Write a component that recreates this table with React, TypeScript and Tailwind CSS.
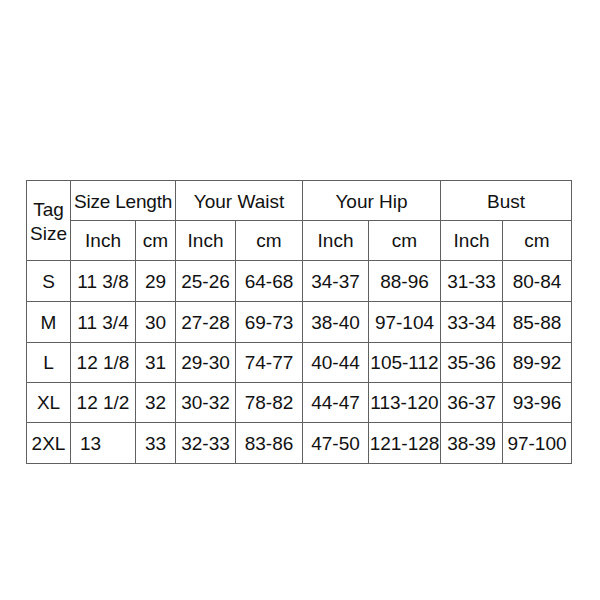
import React from "react";

const widths = [44, 65, 40, 60, 67, 66, 72, 62, 69];

const rows: [string, string, string, string, string, string, string, string, string][] = [
  ["S", "11 3/8", "29", "25-26", "64-68", "34-37", "88-96", "31-33", "80-84"],
  ["M", "11 3/4", "30", "27-28", "69-73", "38-40", "97-104", "33-34", "85-88"],
  ["L", "12 1/8", "31", "29-30", "74-77", "40-44", "105-112", "35-36", "89-92"],
  ["XL", "12 1/2", "32", "30-32", "78-82", "44-47", "113-120", "36-37", "93-96"],
  ["2XL", "13", "33", "32-33", "83-86", "47-50", "121-128", "38-39", "97-100"],
];

const rowHeights = [41, 41, 40, 40, 41];

export default function App() {
  const cell = "border border-[#606060] text-center p-0 whitespace-nowrap";
  return (
    <div
      className="w-[600px] h-[600px] bg-white pt-[180px] pl-[26px] text-[#111] text-[19px] leading-none"
      style={{ fontFamily: '"Liberation Sans", Arial, sans-serif' }}
    >
      <table className="table-fixed border-collapse w-[545px]">
        <colgroup>
          {widths.map((w, i) => (
            <col key={i} style={{ width: w }} />
          ))}
        </colgroup>
        <tbody>
          <tr className="h-[40px]">
            <td rowSpan={2} className={`${cell} leading-[23px] pt-[4px]`}>
              <div className="pb-[1px]">Tag</div>
              <div className="pb-[3px]">Size</div>
            </td>
            <td colSpan={2} className={`${cell} tracking-[-0.2px] pt-[2px]`}>Size Length</td>
            <td colSpan={2} className={`${cell} pt-[2px]`}>Your Waist</td>
            <td colSpan={2} className={`${cell} pt-[2px]`}>Your Hip</td>
            <td colSpan={2} className={`${cell} pt-[2px]`}>Bust</td>
          </tr>
          <tr className="h-[40px]">
            <td className={cell}>Inch</td>
            <td className={cell}>cm</td>
            <td className={cell}>Inch</td>
            <td className={cell}>cm</td>
            <td className={cell}>Inch</td>
            <td className={cell}>cm</td>
            <td className={cell}>Inch</td>
            <td className={cell}>cm</td>
          </tr>
          {rows.map((r, ri) => (
            <tr key={ri} style={{ height: rowHeights[ri] }}>
              {r.map((v, ci) => (
                <td
                  key={ci}
                  className={
                    ri === 4 && ci === 1
                      ? "border border-[#606060] text-left pl-[9px] p-0 whitespace-nowrap"
                      : cell
                  }
                >
                  {v}
                </td>
              ))}
            </tr>
          ))}
        </tbody>
      </table>
    </div>
  );
}
